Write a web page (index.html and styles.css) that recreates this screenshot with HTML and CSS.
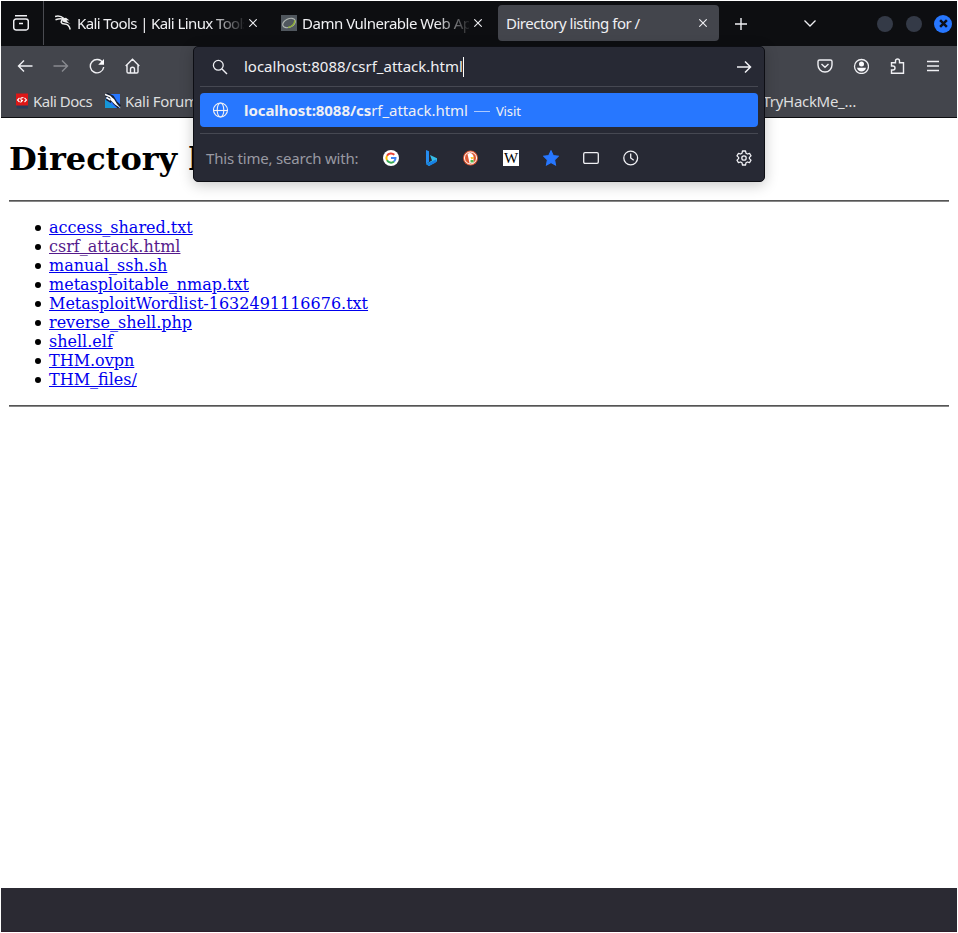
FILE: index.html
```html
<!DOCTYPE html>
<html lang="en">
<head>
<meta charset="utf-8">
<title>Directory listing for /</title>
<link rel="stylesheet" href="styles.css">
</head>
<body>
<div class="window">
  <header class="tabs">
    <div class="view"><svg class="i16" viewBox="0 0 16 16"><path d="M2 .8h12M3 4h10a2.300 2.300 0 0 1 2.300 2.300v6A2.300 2.300 0 0 1 13 14.900H3a2.300 2.300 0 0 1-2.300-2.300V6.300A2.300 2.300 0 0 1 3 4zM6 8.500h4" stroke-width="1.500"/></svg></div>
    <div class="tab tab-kali">
      <svg class="fav" viewBox="0 0 16 16"><path d="M0 1.500q5-1.500 9 2M.5 4.800q5-2 8-.5M8 4c-3 2.500-2 5 1.500 5 4 0 5 2 5.700 5.500" stroke="#eee" stroke-width="1.500"/><path d="M7 3.500l4-.7 3.500 2.700-3-.3 1.500 2 2.500 1.600-5-1.300-3-1z" fill="#eee" stroke="none"/></svg>
      <span class="label fade">Kali Tools | Kali Linux Tools</span>
      <svg class="x" viewBox="0 0 8 8"><path d="M.3.3l7.400 7.400M7.700.3L.3 7.700"/></svg>
    </div>
    <div class="tab tab-dvwa">
      <svg class="fav" viewBox="0 0 16 16"><path fill="#50575e" stroke="none" d="M0 0h16v16H0z"/><ellipse cx="8" cy="8" rx="6.700" ry="4.200" transform="rotate(-25 8 8)" stroke="#b3b9b5" stroke-width="1.200"/><path d="M7 12.300c4-.5 7-3.500 6.700-7" stroke="#8eae35" stroke-width="1.300"/></svg>
      <span class="label fade">Damn Vulnerable Web App</span>
      <svg class="x" viewBox="0 0 8 8"><path d="M.3.3l7.400 7.400M7.700.3L.3 7.700"/></svg>
    </div>
    <div class="tab tab-active">
      <span class="label">Directory listing for /</span>
      <svg class="x" viewBox="0 0 8 8"><path d="M.3.3l7.400 7.400M7.700.3L.3 7.700"/></svg>
    </div>
    <svg class="plus" viewBox="0 0 12 12"><path d="M6 0v12M0 6h12" stroke-width="1.400"/></svg>
    <svg class="chev" viewBox="0 0 12 7"><path d="M.5.5L6 6 11.500.5" stroke-width="1.300"/></svg>
    <div class="controls"><i></i><i></i><b><svg viewBox="0 0 8 8"><path d="M1 1l6 6M7 1L1 7" stroke="#0d1018" stroke-width="2.200"/></svg></b></div>
  </header>
  <div class="nav">
    <div class="nav-group">
      <svg class="i16" viewBox="0 0 16 16"><path d="M15.500 8H1.500M7 2.500L1.500 8 7 13.500" stroke-width="1.400"/></svg>
      <svg class="i16 dim" viewBox="0 0 16 16"><path d="M.5 8h14M9 2.500L14.500 8 9 13.500" stroke-width="1.400"/></svg>
      <svg class="i16" viewBox="0 0 16 16"><path d="M13.800 4.700A6.700 6.700 0 1 0 14.700 9" stroke-width="1.400"/><path d="M15 1v5.800H9.200z" fill="#fbfbfe" stroke="none"/></svg>
      <svg class="i16" viewBox="0 0 16 16"><path d="M.7 8L7.500 1.200 14.300 8M2 7v6.700Q2 15 3.300 15h8.400q1.300 0 1.300-1.300V7M5.500 15v-3.800a2 2 0 0 1 4 0V15" stroke-width="1.400"/></svg>
    </div>
    <div class="nav-group right">
      <svg class="i16" viewBox="0 0 16 16"><path d="M2.600 2h10.800q1.600 0 1.600 1.600V7A7 7 0 0 1 1 7V3.600Q1 2 2.600 2zM4.500 6L8 9.300 11.500 6" stroke-width="1.400"/></svg>
      <svg class="i16" viewBox="0 0 16 16"><circle cx="8.500" cy="8.500" r="7" stroke-width="1.300"/><circle cx="8.500" cy="6" r="2.500" fill="#fbfbfe" stroke="none"/><path d="M4 9.700h9Q12 13.500 8.500 13.500T4 9.700z" fill="#fbfbfe" stroke="none"/></svg>
      <svg class="i16" viewBox="0 0 16 16"><path d="M2.500 7.300V4.700h4V3a2 2 0 0 1 4 0v1.700h4v10.600h-12V12H4a1.800 1.800 0 0 0 0-4H2.500z" stroke-width="1.400"/></svg>
      <svg class="i16" viewBox="0 0 16 16"><path d="M2 3.500h12M2 8h12M2 12.500h12" stroke-width="1.300"/></svg>
    </div>
  </div>
  <div class="bookmarks">
    <svg class="doc" viewBox="0 0 12 16"><path fill="#283c59" stroke="none" d="M0 12h12v3.500H1z"/><path fill="#dc1717" stroke="none" d="M0 .5h12v12H0z"/><path d="M3.500 5L1.500 7l2 2M8.500 4.800L10.500 7l-2 2M7.500 4.500Q4 4.500 5 6.500t1.500 1T4.500 9.500" stroke="#fff"/></svg>
    <span class="bm-docs">Kali Docs</span>
    <svg class="forum" viewBox="0 0 16 16"><path fill="#2777ff" stroke="none" d="M1 1h14v14H1z"/><path fill="#1597d8" stroke="none" d="M0 15V6l10 9z"/><path d="M1 1.500l6 3 3 5 4.500 4.500M2 5l5 3" stroke="#172033" stroke-width="4.500"/><path d="M0 1.500l5 2 3 3M1.500 4.500l4 2.500" stroke="#fff" stroke-width="1.500"/><path d="M5 4l4 2 3 5 4 4.500-6-4-4-4z" fill="#fff" stroke="none"/></svg>
    <span class="bm-forum">Kali Forums</span>
    <span class="bm-thm">TryHackMe_…</span>
  </div>
  <main>
    <h1>Directory listing for /</h1>
    <hr>
    <ul>
      <li><a>access_shared.txt</a></li>
      <li><a class="visited">csrf_attack.html</a></li>
      <li><a>manual_ssh.sh</a></li>
      <li><a>metasploitable_nmap.txt</a></li>
      <li><a>MetasploitWordlist-1632491116676.txt</a></li>
      <li><a>reverse_shell.php</a></li>
      <li><a>shell.elf</a></li>
      <li><a>THM.ovpn</a></li>
      <li><a>THM_files/</a></li>
    </ul>
    <hr>
  </main>
  <footer></footer>
  <section class="urlbar">
    <div class="input">
      <svg class="i16" viewBox="0 0 16 16"><circle cx="6.300" cy="6.300" r="4.900" stroke-width="1.300"/><path d="M10 10l5 5" stroke-width="1.400"/></svg>
      <span class="url">localhost:8088/csrf_attack.html</span><i class="caret"></i>
      <svg class="i16 go" viewBox="0 0 16 16"><path d="M1 8h13.500M9 2.500L14.500 8 9 13.500" stroke-width="1.500"/></svg>
    </div>
    <div class="result">
      <svg class="i16" viewBox="0 0 16 16"><circle cx="7.500" cy="8" r="7"/><ellipse cx="7.500" cy="8" rx="3.300" ry="7"/><path d="M.5 8.500h14"/></svg>
      <span class="match"><b>localhost:8088/cs</b><span>rf_attack.html</span></span>
      <i class="dash"></i><span class="visit">Visit</span>
    </div>
    <div class="engines">
      <span class="hint">This time, search with:</span>
      <div class="engine-list">
        <svg class="i16" viewBox="0 0 16 16"><circle cx="8" cy="8" r="8" fill="#fff" stroke="none"/><g stroke-width="2"><path d="M11.300 4.800A4.600 4.600 0 0 0 4 5.700" stroke="#ea4335"/><path d="M4 5.700A4.600 4.600 0 0 0 4 10.300" stroke="#fbbc05"/><path d="M4 10.300A4.600 4.600 0 0 0 11 11.500" stroke="#34a853"/><path d="M11 11.500A4.500 4.500 0 0 0 12.500 8H8" stroke="#4285f4"/></g></svg>
        <svg class="i16" viewBox="0 0 16 16"><path d="M3 0l3 1.200v10.500L3 14z" fill="#268cf0" stroke="none"/><path d="M7 5l7 3.200v3L6 16l-3-2 6-3.500z" fill="#36bde8" stroke="none"/><path d="M3 14l10-4.500q1.500 2-1 3.500L6 16z" fill="#1680e5" stroke="none"/></svg>
        <svg class="i16" viewBox="0 0 16 16"><circle cx="7.500" cy="8" r="7.500" fill="#de5833" stroke="none"/><circle cx="7.500" cy="8" r="6" stroke="#fff" stroke-width="1"/><path d="M4.500 4q4-3 6 2v7h-4z" fill="#fff" stroke="none"/><path d="M7.500 7l4 .5-3 2z" fill="#fdbd18" stroke="none"/><path d="M7.500 10h3v2.500h-3z" fill="#55b84c" stroke="none"/></svg>
        <span class="wiki">W</span>
        <svg class="i16" viewBox="0 0 16 16"><path d="M8 .8l2.200 4.700 5.100.7-3.700 3.600.9 5.200L8 12.500 3.500 15l.9-5.200L.7 6.200l5.100-.7z" fill="#2777ff" stroke="#2777ff"/></svg>
        <svg class="i16" viewBox="0 0 16 16"><rect x=".7" y="2.700" width="14.600" height="10.600" rx="1.300" stroke-width="1.300"/></svg>
        <svg class="i16" viewBox="0 0 16 16"><circle cx="7.700" cy="8" r="6.900" stroke-width="1.300"/><path d="M7.700 3.500V8l3 2.200" stroke-width="1.300"/></svg>
      </div>
      <svg class="i16 gear" viewBox="0 0 16 16"><path d="M6.500 1h3l.5 2.200 1.400.8 2.100-.7L15 5.900 13.400 7.400v1.200L15 10.100l-1.500 2.600-2.100-.7-1.400.8-.5 2.200h-3L6 12.800 4.600 12l-2.100.7L1 10.100l1.600-1.500V7.400L1 5.900l1.500-2.600 2.100.7L6 3.200z" stroke-linejoin="round" stroke-width="1.300"/><circle cx="8" cy="8" r="2.200" stroke-width="1.300"/></svg>
    </div>
  </section>
</div>
</body>
</html>
```
FILE: styles.css
```css
* { box-sizing: border-box; }
body { margin: 0; background: #fff; font: 15px/20px "Noto Sans", sans-serif; color: #f0f0f3; }
.window { position: relative; width: 958px; height: 933px; padding: 1px; display: flex; flex-direction: column; overflow: hidden; }
svg { display: block; fill: none; stroke: #f0f0f4; stroke-width: 1.1; flex: none; }
.i16, .fav { width: 16px; height: 16px; }
.tabs { height: 45px; background: #0d0e11; display: flex; align-items: center; flex: none; }
.view { width: 43px; height: 44px; border-right: 1px solid #4a4b51; padding: 14px 0 0 12px; align-self: flex-start; }
.tab { display: flex; align-items: center; height: 36px; border-radius: 4px; white-space: nowrap; margin-bottom: 1px; }
.label { flex: 1; overflow: hidden; }
.fade { mask-image: linear-gradient(to right, #000 80%, transparent 102%); }
.x { width: 8px; height: 8px; }
.tab-kali { width: 202px; margin-left: 11px; }
.tab-kali .label { margin: 0 5px 0 6px; letter-spacing: -.6px; }
.tab-dvwa { width: 201px; margin-left: 24px; }
.tab-dvwa .label { margin: 0 5px 0 5px; letter-spacing: -.48px; }
.tab-active { width: 221px; margin-left: 16px; background: #43454c; padding: 0 12px 0 8px; letter-spacing: -.5px; }
.plus { width: 12px; height: 12px; margin-left: 16px; }
.chev { width: 12px; height: 7px; margin-left: 57px; }
.controls { display: flex; gap: 13px; margin-left: 61px; align-items: center; }
.controls i { width: 16px; height: 16px; border-radius: 50%; background: #343a47; }
.controls b { width: 18px; height: 18px; margin-left: -1px; border-radius: 50%; background: #2777ff; display: grid; place-items: center; }
.controls svg { width: 9px; height: 9px; }
.nav { height: 40px; background: #43454c; display: flex; justify-content: space-between; align-items: center; padding: 0 16px; flex: none; }
.nav-group { display: flex; gap: 20px; }
.dim { opacity: .4; }
.bookmarks { height: 32px; background: #43454c; border-bottom: 1px solid #0d0e11; display: flex; align-items: center; padding: 0 0 1px 15px; white-space: nowrap; flex: none; color: #dededf; }
.doc { width: 12px; height: 16px; }
.forum { width: 16px; height: 16px; }
.bm-docs { width: 66px; margin: 0 6px 0 5px; letter-spacing: -.5px; }
.bm-forum { width: 90px; margin-left: 4px; letter-spacing: -.3px; }
.bm-thm { margin-left: auto; margin-right: 101px; letter-spacing: -.3px; }
main { flex: 1; min-height: 0; padding: 0 8px; overflow: hidden; color: #000; font: 16px/19px "DejaVu Serif", serif; }
h1 { font-size: 32px; line-height: 37px; margin: 23px 0 22px; white-space: nowrap; }
hr { border: 0; height: 2px; margin: 0; background: linear-gradient(#555 50%, #888 50%); }
ul { margin: 16px 0; padding-left: 40px; list-style: none; }
li { display: flex; align-items: center; }
li::before { content: ""; width: 6px; height: 6px; margin: 1px 8px 0 -14px; border-radius: 50%; background: #000; }
a { color: #00e; text-decoration: underline; }
.visited { color: #551a8b; }
footer { height: 44px; background: #2b2a33; border-bottom: 1px solid #301e2b; flex: none; }
.urlbar { position: absolute; left: 193px; top: 46px; width: 572px; height: 136px; padding: 0 6px; background: #272934; border: 1px solid #0d0e14; border-radius: 5px; box-shadow: 0 3px 14px rgba(0,0,0,.22); white-space: nowrap; }
.input { height: 40px; display: flex; align-items: center; padding: 0 6px 0 12px; border-bottom: 1px solid #464852; }
.url { margin: -2px 0 0 16px; letter-spacing: -.01px; }
.caret { width: 1px; height: 20px; background: #fff; }
.go { margin-left: auto; }
.result { height: 34px; margin-top: 6px; border-radius: 4px; background: #2777ff; display: flex; align-items: center; padding-left: 13px; }
.match { margin-left: 15px; letter-spacing: -.06px; }
.dash { width: 16px; height: 1px; margin: 2px 6px 0; background: #abc9ff; }
.visit { font-size: 13px; letter-spacing: -.1px; padding-top: 1px; }
.engines { margin-top: 6px; height: 48px; border-top: 1px solid #464852; display: flex; align-items: center; padding: 1px 6px 0; }
.hint { width: 153px; color: #9999a2; letter-spacing: -.2px; }
.engine-list { display: flex; gap: 24px; margin-left: 24px; }
.wiki { width: 16px; height: 16px; background: #fff; color: #000; font: 15px/16px "Liberation Serif", serif; text-align: center; }
.gear { margin-left: auto; }
```
